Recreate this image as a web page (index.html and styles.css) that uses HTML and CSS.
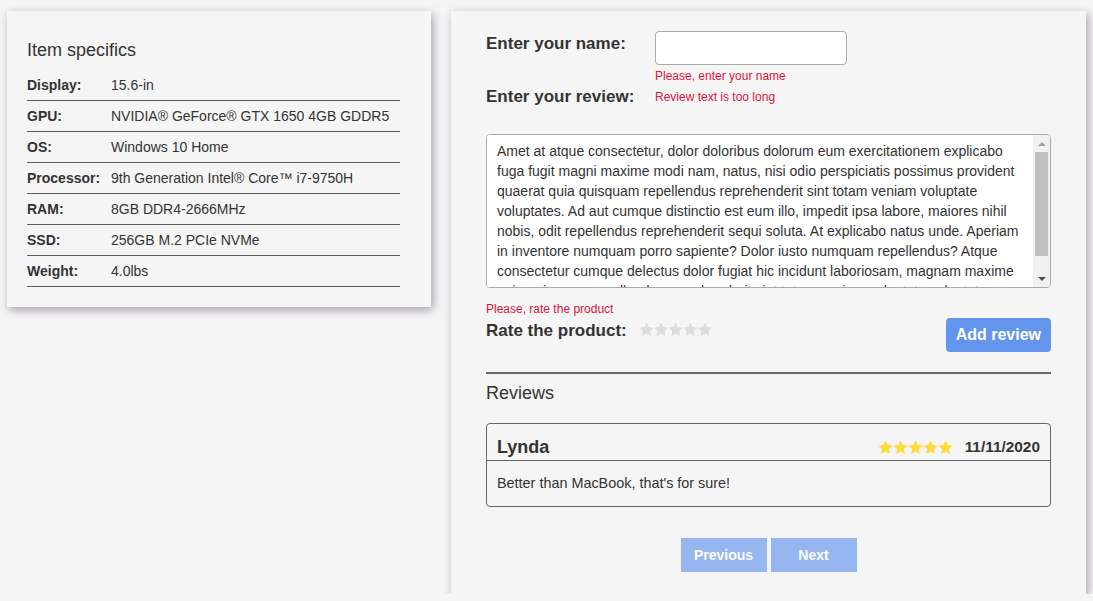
FILE: index.html
```html
<!DOCTYPE html>
<html lang="en">
<head>
<meta charset="utf-8">
<title>Item review</title>
<link rel="stylesheet" href="styles.css">
</head>
<body>
<svg class="defs" width="0" height="0" aria-hidden="true">
  <defs>
    <path id="star" d="M7.5 0.5 L9.62 5.09 L14.63 5.68 L10.92 9.11 L11.91 14.07 L7.5 11.6 L3.09 14.07 L4.08 9.11 L0.37 5.68 L5.38 5.09 Z"/>
  </defs>
</svg>
<div class="page">
  <section class="card specs">
    <h2 class="specs-title">Item specifics</h2>
    <table class="specs-table">
      <tr><th>Display:</th><td>15.6-in</td></tr>
      <tr><th>GPU:</th><td>NVIDIA® GeForce® GTX 1650 4GB GDDR5</td></tr>
      <tr><th>OS:</th><td>Windows 10 Home</td></tr>
      <tr><th>Processor:</th><td>9th Generation Intel® Core™ i7-9750H</td></tr>
      <tr><th>RAM:</th><td>8GB DDR4-2666MHz</td></tr>
      <tr><th>SSD:</th><td>256GB M.2 PCIe NVMe</td></tr>
      <tr><th>Weight:</th><td>4.0lbs</td></tr>
    </table>
  </section>

  <section class="card review-panel">
    <form class="review-form">
      <div class="name-row">
        <label class="field-label name-label" for="name">Enter your name:</label>
        <div class="name-control">
          <input id="name" class="name-input" type="text">
          <div class="error name-error">Please, enter your name</div>
        </div>
      </div>
      <div class="review-row">
        <label class="field-label review-label" for="review">Enter your review:</label>
        <div class="error">Review text is too long</div>
      </div>
      <div class="textarea-box">
        <textarea id="review" class="review-text">Amet at atque consectetur, dolor doloribus dolorum eum exercitationem explicabo fuga fugit magni maxime modi nam, natus, nisi odio perspiciatis possimus provident quaerat quia quisquam repellendus reprehenderit sint totam veniam voluptate voluptates. Ad aut cumque distinctio est eum illo, impedit ipsa labore, maiores nihil nobis, odit repellendus reprehenderit sequi soluta. At explicabo natus unde. Aperiam in inventore numquam porro sapiente? Dolor iusto numquam repellendus? Atque consectetur cumque delectus dolor fugiat hic incidunt laboriosam, magnam maxime quia quisquam repellendus reprehenderit sint totam veniam voluptate voluptates ipsum dolor sit amet.</textarea>
        <div class="scrollbar">
          <span class="sb-btn"><span class="arrow-up"></span></span>
          <span class="sb-track"><span class="sb-thumb"></span></span>
          <span class="sb-btn"><span class="arrow-down"></span></span>
        </div>
      </div>
      <div class="error rate-error">Please, rate the product</div>
      <div class="rate-row">
        <div class="rate-left">
          <span class="field-label">Rate the product:</span>
          <svg class="stars stars-empty" width="74" height="15" viewBox="0 0 74 15">
            <use href="#star" x="0"/><use href="#star" x="14.6"/><use href="#star" x="29.2"/><use href="#star" x="43.8"/><use href="#star" x="58.4"/>
          </svg>
        </div>
        <button type="button" class="add-btn">Add review</button>
      </div>
    </form>

    <hr class="divider">
    <h3 class="reviews-title">Reviews</h3>

    <article class="review">
      <header class="review-head">
        <span class="review-author">Lynda</span>
        <div class="review-meta">
          <svg class="stars stars-full" width="75" height="15" viewBox="0 0 75 15">
            <use href="#star" x="0"/><use href="#star" x="15"/><use href="#star" x="30"/><use href="#star" x="45"/><use href="#star" x="60"/>
          </svg>
          <span class="review-date">11/11/2020</span>
        </div>
      </header>
      <p class="review-body">Better than MacBook, that's for sure!</p>
    </article>

    <nav class="pager">
      <button type="button" class="pager-btn">Previous</button>
      <button type="button" class="pager-btn">Next</button>
    </nav>
  </section>
</div>
</body>
</html>
```

FILE: styles.css
```css
* { box-sizing: border-box; }

html, body {
  margin: 0;
  background: #f5f5f5;
  font-family: "Liberation Sans", Arial, sans-serif;
  color: #333;
}

.defs { position: absolute; width: 0; height: 0; overflow: hidden; }

.page {
  display: flex;
  align-items: flex-start;
  gap: 20px;
  padding: 11px 7px 0;
}

.card {
  background: #f5f5f5;
  box-shadow: 2px 3px 9px rgba(70, 50, 85, 0.45);
}

/* ---------- specs ---------- */
.specs {
  width: 424px;
  padding: 28px 31px 20px 20px;
}

.specs-title {
  margin: 0 0 9px;
  font-size: 18px;
  line-height: 22px;
  font-weight: normal;
}

.specs-table {
  width: 100%;
  border-collapse: collapse;
  font-size: 14px;
  line-height: 16px;
}

.specs-table tr { border-bottom: 1px solid #5f5f5f; }

.specs-table th {
  width: 84px;
  padding: 7px 0;
  text-align: left;
  font-weight: bold;
}

.specs-table td { padding: 7px 0; }

/* ---------- review panel ---------- */
.review-panel {
  width: 635px;
  padding: 20px 35px 22px;
}

.review-form { margin: 0; }

.field-label {
  font-size: 17px;
  line-height: 20px;
  font-weight: bold;
}

.name-row {
  display: flex;
  align-items: flex-start;
}

.name-label {
  width: 169px;
  padding-top: 3px;
}

.name-input {
  display: block;
  width: 192px;
  height: 34px;
  margin: 0;
  border: 1px solid #aaa;
  border-radius: 4px;
  background: #fff;
}

.error {
  font-size: 12px;
  line-height: 14px;
  color: #dc143c;
}

.name-error { margin-top: 4px; }

.review-row {
  display: flex;
  align-items: center;
  margin-top: 4px;
}

.review-label { width: 169px; }

.textarea-box {
  display: flex;
  height: 154px;
  margin-top: 27px;
  border: 1px solid #aaa;
  border-radius: 4px;
  background: #fff;
  overflow: hidden;
}

.review-text {
  flex: 1;
  margin: 0;
  padding: 6px 10px 0;
  border: 0;
  outline: 0;
  resize: none;
  overflow: hidden;
  font-family: "Liberation Sans", Arial, sans-serif;
  font-size: 14px;
  line-height: 20px;
  color: #333;
  background: #fff;
}

.scrollbar {
  width: 17px;
  display: flex;
  flex-direction: column;
  background: #f1f1f1;
}

.sb-btn {
  height: 17px;
  display: flex;
  align-items: center;
  justify-content: center;
}

.arrow-up {
  width: 0; height: 0;
  border-left: 4px solid transparent;
  border-right: 4px solid transparent;
  border-bottom: 4px solid #a3a3a3;
}

.arrow-down {
  width: 0; height: 0;
  border-left: 4px solid transparent;
  border-right: 4px solid transparent;
  border-top: 4px solid #505050;
}

.sb-track {
  flex: 1;
  display: flex;
  flex-direction: column;
  padding: 0 2px;
}

.sb-thumb {
  height: 104px;
  background: #c1c1c1;
}

.rate-error { margin-top: 14px; }

.rate-row {
  display: flex;
  justify-content: space-between;
  align-items: flex-start;
}

.rate-left {
  display: flex;
  align-items: center;
  gap: 12px;
  margin-top: 5px;
}

.stars-empty { fill: #dcdcdc; margin-top: -3px; }
.stars-full { fill: #fedc38; }

.add-btn {
  margin-top: 2px;
  height: 34px;
  padding: 0 10px;
  border: 0;
  border-radius: 4px;
  background: #6495ed;
  color: #fff;
  font-family: "Liberation Sans", Arial, sans-serif;
  font-size: 16px;
  font-weight: bold;
}

.divider {
  margin: 20px 0 0;
  border: 0;
  border-top: 2px solid #666;
}

.reviews-title {
  margin: 8px 0 0;
  font-size: 18px;
  line-height: 22px;
  font-weight: normal;
}

.review {
  margin-top: 19px;
  border: 1px solid #666;
  border-radius: 4px;
}

.review-head {
  display: flex;
  justify-content: space-between;
  align-items: center;
  padding: 12px 10px 2px;
  border-bottom: 1px solid #666;
}

.review-author {
  font-size: 18px;
  line-height: 22px;
  font-weight: bold;
}

.review-meta {
  display: flex;
  align-items: center;
  gap: 12px;
}

.review-date {
  font-size: 15.4px;
  font-weight: bold;
}

.review-body {
  margin: 0;
  padding: 13px 10px 14px;
  font-size: 14.4px;
  line-height: 18px;
}

.pager {
  display: flex;
  justify-content: center;
  gap: 4px;
  margin-top: 31px;
}

.pager-btn {
  width: 86px;
  height: 34px;
  border: 0;
  background: #6495ed;
  opacity: 0.65;
  color: #fff;
  font-family: "Liberation Sans", Arial, sans-serif;
  font-size: 14px;
  font-weight: bold;
}
```
